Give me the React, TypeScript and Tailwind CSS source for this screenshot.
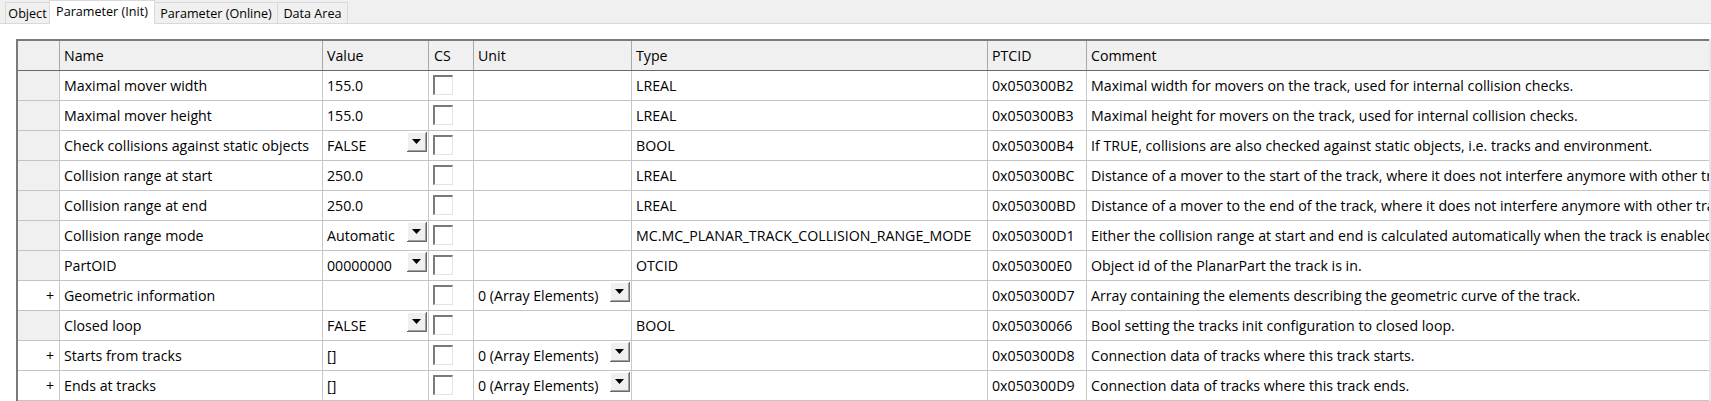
import React from "react";

type Row = {
  plus?: boolean;
  name: string;
  value: string;
  valueDrop?: boolean;
  unit?: string;
  unitDrop?: boolean;
  type: string;
  ptcid: string;
  comment: string;
};

const rows: Row[] = [
  { name: "Maximal mover width", value: "155.0", type: "LREAL", ptcid: "0x050300B2", comment: "Maximal width for movers on the track, used for internal collision checks." },
  { name: "Maximal mover height", value: "155.0", type: "LREAL", ptcid: "0x050300B3", comment: "Maximal height for movers on the track, used for internal collision checks." },
  { name: "Check collisions against static objects", value: "FALSE", valueDrop: true, type: "BOOL", ptcid: "0x050300B4", comment: "If TRUE, collisions are also checked against static objects, i.e. tracks and environment." },
  { name: "Collision range at start", value: "250.0", type: "LREAL", ptcid: "0x050300BC", comment: "Distance of a mover to the start of the track, where it does not interfere anymore with other tracks." },
  { name: "Collision range at end", value: "250.0", type: "LREAL", ptcid: "0x050300BD", comment: "Distance of a mover to the end of the track, where it does not interfere anymore with other tracks." },
  { name: "Collision range mode", value: "Automatic", valueDrop: true, type: "MC.MC_PLANAR_TRACK_COLLISION_RANGE_MODE", ptcid: "0x050300D1", comment: "Either the collision range at start and end is calculated automatically when the track is enabled or set manually." },
  { name: "PartOID", value: "00000000", valueDrop: true, type: "OTCID", ptcid: "0x050300E0", comment: "Object id of the PlanarPart the track is in." },
  { plus: true, name: "Geometric information", value: "", unit: "0 (Array Elements)", unitDrop: true, type: "", ptcid: "0x050300D7", comment: "Array containing the elements describing the geometric curve of the track." },
  { name: "Closed loop", value: "FALSE", valueDrop: true, type: "BOOL", ptcid: "0x05030066", comment: "Bool setting the tracks init configuration to closed loop." },
  { plus: true, name: "Starts from tracks", value: "[]", unit: "0 (Array Elements)", unitDrop: true, type: "", ptcid: "0x050300D8", comment: "Connection data of tracks where this track starts." },
  { plus: true, name: "Ends at tracks", value: "[]", unit: "0 (Array Elements)", unitDrop: true, type: "", ptcid: "0x050300D9", comment: "Connection data of tracks where this track ends." },
];

const grid = "grid grid-cols-[42px_263px_106px_45px_158px_356px_99px_1fr]";

function DropButton() {
  return (
    <div className="self-start mt-[1px] mr-[1px] w-[20px] h-[20px] shrink-0 bg-[#f0f0f0] border-r border-b border-[#696969] shadow-[inset_1px_1px_0_#ffffff,inset_-1px_-1px_0_#a0a0a0] flex items-center justify-center pb-[1px]">
      <svg width="9" height="5" viewBox="0 0 9 5" className="block">
        <polygon points="0,0 9,0 4.5,5" fill="#000" />
      </svg>
    </div>
  );
}

function CheckBox() {
  return (
    <div className="self-start mt-[4px] ml-[4px] w-[20px] h-[20px] bg-white border-t-2 border-l-2 border-t-[#7a7a7a] border-l-[#7a7a7a] border-r border-b border-r-[#e3e3e3] border-b-[#e3e3e3]" />
  );
}

const cell = "flex items-center border-r border-[#c8c8c8] overflow-hidden whitespace-nowrap";
const hcell = "flex items-center border-r border-[#a8a8a8] overflow-hidden whitespace-nowrap pl-[4px]";

export default function App() {
  return (
    <div className="w-[1711px] h-[401px] overflow-hidden bg-white text-black font-['Open_Sans','Noto_Sans',sans-serif]">
      {/* Tab strip */}
      <div className="h-[24px] bg-[#f0f0f0] border-b border-[#d9d9d9] flex items-end pl-[5px] text-[12.6px]">
        <div className="w-[45px] h-[21px] border-t border-l border-r border-[#d9d9d9] bg-[#f0f0f0] flex items-center justify-center pt-[2px]">Object</div>
        <div className="relative z-10 -ml-px -mb-px w-[106px] h-[24px] border-t border-l border-r border-[#d9d9d9] bg-white flex items-center justify-center pb-[1px]">Parameter (Init)</div>
        <div className="-ml-px w-[124px] h-[21px] border-t border-l border-r border-[#d9d9d9] bg-[#f0f0f0] flex items-center justify-center pt-[2px]">Parameter (Online)</div>
        <div className="-ml-px w-[71px] h-[21px] border-t border-l border-r border-[#d9d9d9] bg-[#f0f0f0] flex items-center justify-center pt-[2px]">Data Area</div>
      </div>

      {/* Table */}
      <div className="flex pl-4 mt-[15px] text-[14.2px]">
        <div className="flex-1 min-w-0 border-l-2 border-[#7a7a7a]">
          <div className={`${grid} h-[32px] bg-[#f0f0f0] border-t-2 border-t-[#7a7a7a] border-b border-b-[#696969]`}>
            <div className={hcell}></div>
            <div className={hcell}>Name</div>
            <div className={hcell}>Value</div>
            <div className={`${hcell} pl-[5px]`}>CS</div>
            <div className={hcell}>Unit</div>
            <div className={hcell}>Type</div>
            <div className={hcell}>PTCID</div>
            <div className="flex items-center pl-[4px]">Comment</div>
          </div>
          {rows.map((r, i) => (
            <div key={i} className={`${grid} h-[30px] border-b border-[#c4c4c4]`}>
              <div className={`${cell} justify-end pr-[5px] ${r.plus ? "bg-white" : "bg-[#f0f0f0]"}`}>{r.plus ? "+" : ""}</div>
              <div className={`${cell} pl-[4px]`}>{r.name}</div>
              <div className={`${cell}`}>
                <span className="flex-1 pl-[4px]">{r.value}</span>
                {r.valueDrop && <DropButton />}
              </div>
              <div className={`${cell} items-start`}>
                <CheckBox />
              </div>
              <div className={`${cell}`}>
                <span className="flex-1 pl-[4px]">{r.unit ?? ""}</span>
                {r.unitDrop && <DropButton />}
              </div>
              <div className={`${cell} pl-[4px]`}>{r.type}</div>
              <div className={`${cell} pl-[4px]`}>{r.ptcid}</div>
              <div className="flex items-center overflow-hidden whitespace-nowrap pl-[4px]">{r.comment}</div>
            </div>
          ))}
        </div>
        <div className="w-[2px] bg-[#e6e6ee]" />
      </div>
    </div>
  );
}
